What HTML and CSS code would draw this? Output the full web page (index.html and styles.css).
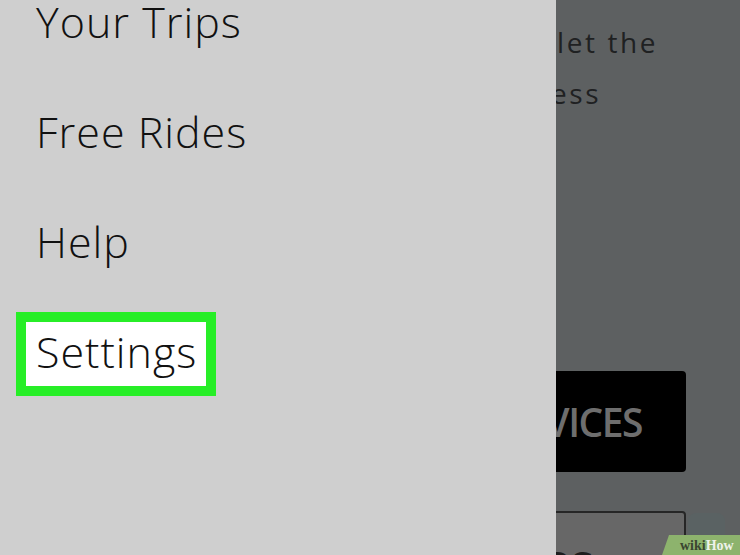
FILE: index.html
```html
<!DOCTYPE html>
<html lang="en">
<head>
    <meta charset="UTF-8">
    <title>Menu - Settings</title>
    <link rel="stylesheet" href="styles.css">
</head>
<body>
<div class="screen">
    <nav class="drawer">
        <ul class="menu">
            <li>Your Trips</li>
            <li>Free Rides</li>
            <li>Help</li>
            <li class="active">Settings</li>
        </ul>
    </nav>
    <main class="backdrop">
        <p class="intro">
            <span class="line first">let the</span>
            <span class="line second">ess</span>
        </p>
        <div class="btn btn-dark">DEVICES</div>
        <div class="row">
            <div class="btn btn-outline">ERS</div>
            <div class="chip"></div>
        </div>
    </main>
</div>
<div class="wikihow"><span class="wiki">wiki</span><span class="how">How</span></div>
</body>
</html>
```

FILE: styles.css
```css
body {
    margin: 0;
    font-family: "Open Sans", "Noto Sans", sans-serif;
    overflow: hidden;
}
.screen {
    display: flex;
    width: 740px;
    height: 555px;
}
.drawer {
    width: 556px;
    flex-shrink: 0;
    background: #cfcfcf;
}
.menu {
    list-style: none;
    margin: 0;
    padding: 0 0 0 36px;
    display: flex;
    flex-direction: column;
    gap: 66px;
    font-size: 43px;
    font-weight: 300;
    line-height: 44px;
    letter-spacing: 1px;
    color: #111;
}
.menu .active {
    align-self: flex-start;
    margin: -18px 0 0 -20px;
    padding: 8px 9px 12px 10px;
    border: 10px solid #27ee27;
    background: #fff;
}
.backdrop {
    flex: 1;
    display: flex;
    flex-direction: column;
    overflow: hidden;
    background: #5d6061;
}
.intro {
    margin: 0;
    padding-top: 17px;
    font-size: 28px;
    line-height: 51px;
    letter-spacing: 2.6px;
    color: #1f2122;
}
.line {
    display: block;
    white-space: nowrap;
}
.line.first {
    margin-left: 1px;
}
.line.second {
    margin-left: -5px;
}
.btn {
    width: 230px;
    margin-left: -100px;
    box-sizing: border-box;
    border-radius: 4px;
    text-align: right;
    white-space: nowrap;
}
.btn-dark {
    margin-top: 252px;
    height: 101px;
    padding-right: 44px;
    background: #000;
    color: #6e6e6e;
    font-size: 39px;
    font-weight: 600;
    line-height: 101px;
    letter-spacing: -1.5px;
}
.row {
    display: flex;
    align-items: flex-start;
    margin-top: 39px;
}
.btn-outline {
    flex-shrink: 0;
    height: 80px;
    padding: 24px 0 0 0;
    text-align: left;
    text-indent: 64px;
    border: 2px solid #262626;
    background: #676767;
    color: #1e1e1e;
    font-size: 40px;
    font-weight: 700;
}
.chip {
    width: 37px;
    height: 60px;
    margin: 2px 0 0 2px;
    border-radius: 8px;
    background: #5a6263;
}
.wikihow {
    position: absolute;
    right: 0;
    bottom: 0;
    width: 60px;
    height: 20px;
    padding-left: 18px;
    background: #8db36d;
    clip-path: polygon(7px 0, 100% 0, 100% 100%, 0 100%);
    font-family: "Liberation Serif", serif;
    font-weight: 700;
    font-size: 14px;
    line-height: 21px;
    white-space: nowrap;
}
.wiki {
    color: #3a4630;
}
.how {
    color: #eef2ea;
}
```
